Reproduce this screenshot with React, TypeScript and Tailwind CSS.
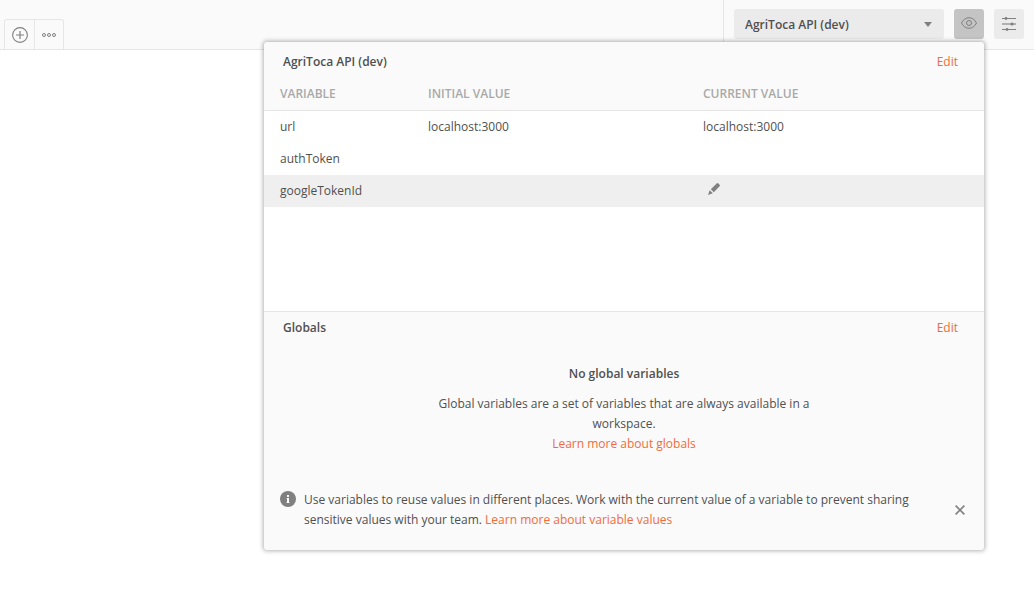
import React, { useState } from "react";

type Variable = { name: string; initial: string; current: string };

const variables: Variable[] = [
  { name: "url", initial: "localhost:3000", current: "localhost:3000" },
  { name: "authToken", initial: "", current: "" },
  { name: "googleTokenId", initial: "", current: "" },
];

function PlusCircleIcon() {
  return (
    <svg width="16" height="16" viewBox="0 0 16 16" fill="none" stroke="#808080" aria-hidden="true">
      <circle cx="8" cy="8" r="7.4" strokeWidth="1.1" />
      <path d="M8 4v8M4 8h8" strokeWidth="1.2" />
    </svg>
  );
}

function DotsIcon() {
  return (
    <svg width="14" height="4" viewBox="0 0 14 4" fill="none" stroke="#808080" aria-hidden="true">
      <circle cx="2" cy="2" r="1.5" />
      <circle cx="7" cy="2" r="1.5" />
      <circle cx="12" cy="2" r="1.5" />
    </svg>
  );
}

function EyeIcon() {
  return (
    <svg width="16" height="12" viewBox="0 0 16 12" fill="none" stroke="#808080" aria-hidden="true">
      <path d="M0.5 6C2.3 2.6 4.9 0.7 8 0.7S13.7 2.6 15.5 6C13.7 9.4 11.1 11.3 8 11.3S2.3 9.4 0.5 6Z" />
      <circle cx="8" cy="6" r="2.5" />
    </svg>
  );
}

function SlidersIcon() {
  return (
    <svg width="14" height="14" viewBox="0 0 14 14" fill="#808080" aria-hidden="true">
      <path d="M0 1h14v1H0zM0 12h14v1H0z" />
      <path d="M0 6h14v2H0z" fillOpacity="0.55" />
      <circle cx="4" cy="1.5" r="1.4" />
      <circle cx="10" cy="7" r="1.6" />
      <circle cx="5" cy="12.5" r="1.4" />
    </svg>
  );
}

function PencilIcon() {
  return (
    <svg width="12" height="12" viewBox="0 0 12 12" fill="#808080" aria-hidden="true">
      <path d="M8.7 0.4a1.2 1.2 0 0 1 1.6 0l1.3 1.3a1.2 1.2 0 0 1 0 1.6L5.8 9.2 2.8 6.2Z" />
      <path d="M1.7 7.2 4.8 10.3 0 12Z" />
    </svg>
  );
}

function InfoIcon() {
  return (
    <svg width="16" height="16" viewBox="0 0 16 16" aria-hidden="true">
      <circle cx="8" cy="8" r="8" fill="#808080" />
      <path d="M7 4h2v2H7zM7 7h2v5H7z" fill="#fafafa" />
      <path d="M6.4 7H7v1h-.6zM6.4 11h3.2v1H6.4z" fill="#fafafa" fillOpacity="0.6" />
    </svg>
  );
}

function CloseIcon() {
  return (
    <svg width="10" height="10" viewBox="0 0 10 10" stroke="#808080" strokeWidth="1.6" aria-hidden="true">
      <path d="M0.6 0.6l8.8 8.8M9.4 0.6L0.6 9.4" />
    </svg>
  );
}

function SectionHeader({ title }: { title: string }) {
  return (
    <div className="flex h-8 items-center justify-between pr-[26px] pl-[19px]">
      <h2 className="font-semibold">{title}</h2>
      <button type="button" className="text-[#f26b3a]" aria-label={`Edit ${title}`}>
        Edit
      </button>
    </div>
  );
}

function EnvironmentPreview({ onClose, showTip }: { onClose: () => void; showTip: boolean }) {
  return (
    <section
      aria-label="Environment quick look"
      className="absolute top-[42px] right-[50px] w-[720px] max-w-full overflow-hidden rounded-[3px] bg-[#fafafa] shadow-[0_0_4px_1px_rgba(0,0,0,0.3)]"
    >
      <div className="pt-1">
        <SectionHeader title="AgriToca API (dev)" />
        <div className="min-h-[234px] border-b border-[#e6e6e6] bg-white">
          <table className="w-full table-fixed border-separate border-spacing-0 text-left">
            <thead className="bg-[#fafafa] text-[#a9a9a9]">
              <tr className="h-[33px]">
                <th className="w-[148px] border-b border-[#e6e6e6] px-4 font-semibold">VARIABLE</th>
                <th className="w-[275px] border-b border-[#e6e6e6] px-4 font-semibold">INITIAL VALUE</th>
                <th className="border-b border-[#e6e6e6] px-4 font-semibold">CURRENT VALUE</th>
              </tr>
            </thead>
            <tbody>
              {variables.map((v) => (
                <tr key={v.name} className="h-8 last:bg-[#efefef]">
                  <td className="px-4">{v.name}</td>
                  <td className="px-4">{v.initial}</td>
                  <td className="px-4">
                    {v.name === "googleTokenId" ? (
                      <button type="button" aria-label="Edit current value" className="block px-[5px] pb-1">
                        <PencilIcon />
                      </button>
                    ) : (
                      v.current
                    )}
                  </td>
                </tr>
              ))}
            </tbody>
          </table>
        </div>
      </div>
      <SectionHeader title="Globals" />
      <div className="mx-auto max-w-[400px] pt-5 text-center">
        <h3 className="font-semibold">No global variables</h3>
        <p className="mt-[10px]">Global variables are a set of variables that are always available in a workspace.</p>
        <a href="#globals" className="block text-[#f26b3a]">
          Learn more about globals
        </a>
      </div>
      {showTip && (
        <div className="mt-9 flex items-center px-4 pb-5">
          <div className="shrink-0 self-start pt-px pr-2">
            <InfoIcon />
          </div>
          <p className="max-w-[620px] flex-1">
            Use variables to reuse values in different places. Work with the current value of a variable to prevent
            sharing sensitive values with your team.{" "}
            <a href="#variable-values" className="text-[#f26b3a]">
              Learn more about variable values
            </a>
          </p>
          <button type="button" aria-label="Dismiss" onClick={onClose} className="ml-auto p-[3px]">
            <CloseIcon />
          </button>
        </div>
      )}
    </section>
  );
}

export default function App() {
  const [open, setOpen] = useState(true);
  const [showTip, setShowTip] = useState(true);

  return (
    <div className="relative min-h-screen bg-white font-['Open_Sans',sans-serif] text-xs/5 text-[#505050]">
      <header className="flex h-[50px] justify-between border-b border-[#e6e6e6] bg-[#fafafa]">
        <div className="flex items-end pl-1">
          <div className="flex h-[30px] divide-x divide-[#e6e6e6] rounded-t-[3px] border border-b-0 border-[#e6e6e6]">
            <button type="button" aria-label="New tab" className="flex w-[30px] items-center justify-center">
              <PlusCircleIcon />
            </button>
            <button type="button" aria-label="Tab options" className="flex w-7 items-center justify-center">
              <DotsIcon />
            </button>
          </div>
        </div>
        <div className="flex items-start gap-[10px] border-l border-[#e6e6e6] px-[10px] pt-[9px]">
          <div className="relative">
            <select
              aria-label="Environment"
              className="block h-[30px] w-[210px] appearance-none rounded-[3px] bg-[#ebebeb] pt-px pr-8 pl-[11px] font-semibold"
            >
              <option>AgriToca API (dev)</option>
              <option>No Environment</option>
            </select>
            <svg
              className="pointer-events-none absolute top-[13px] right-3"
              width="8"
              height="5"
              viewBox="0 0 8 5"
              fill="#808080"
              aria-hidden="true"
            >
              <path d="M0 0h8L4 5Z" />
            </svg>
          </div>
          <button
            type="button"
            aria-label="Environment quick look"
            aria-expanded={open}
            onClick={() => setOpen(!open)}
            className="flex size-[30px] items-center justify-center rounded-[3px] bg-[#c4c4c4] pb-0.5"
          >
            <EyeIcon />
          </button>
          <button
            type="button"
            aria-label="Manage environments"
            className="flex size-[30px] items-center justify-center rounded-[3px] bg-[#ebebeb]"
          >
            <SlidersIcon />
          </button>
        </div>
      </header>
      {open && <EnvironmentPreview showTip={showTip} onClose={() => setShowTip(false)} />}
    </div>
  );
}
